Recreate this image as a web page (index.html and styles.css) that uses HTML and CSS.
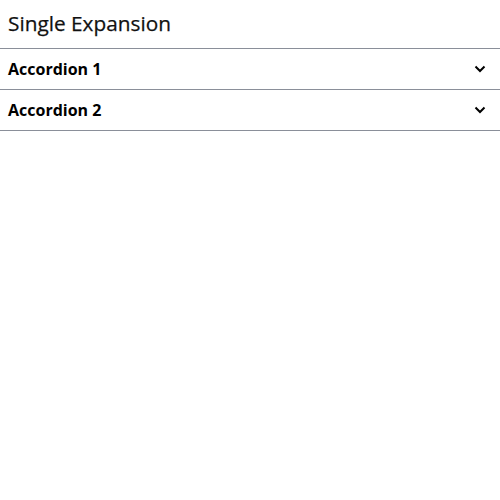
FILE: index.html
```html
<!DOCTYPE html>
<html>
<head>
<meta charset="utf-8">
<link rel="stylesheet" href="styles.css">
</head>
<body>
<h2 class="title">Single Expansion</h2>
<div class="accordion">
  <div class="item">
    <span class="label">Accordion 1</span>
    <svg class="chev" width="12" height="8" viewBox="0 0 12 8"><path d="M1.5 1.5 L6 6 L10.5 1.5" fill="none" stroke="#000" stroke-width="2"/></svg>
  </div>
  <div class="item">
    <span class="label">Accordion 2</span>
    <svg class="chev" width="12" height="8" viewBox="0 0 12 8"><path d="M1.5 1.5 L6 6 L10.5 1.5" fill="none" stroke="#000" stroke-width="2"/></svg>
  </div>
</div>
</body>
</html>
```
FILE: styles.css
```css
body {
  margin: 0;
  font-family: "Open Sans", sans-serif;
  color: #000;
  background: #fff;
}
.title {
  margin: 0;
  box-sizing: border-box;
  height: 49px;
  padding: 0 8px 2px;
  display: flex;
  align-items: center;
  font-size: 20.8px;
  font-weight: 500;
  color: #111;
  -webkit-text-stroke: 0.25px #111;
  border-bottom: 1px solid #8a8f99;
}
.item {
  height: 40px;
  display: flex;
  align-items: center;
  justify-content: space-between;
  padding: 0 14px 0 8px;
  border-bottom: 1px solid #8a8f99;
}
.label {
  font-size: 16px;
  font-weight: 700;
}
.chev {
  display: block;
  margin-top: -1px;
}
```
